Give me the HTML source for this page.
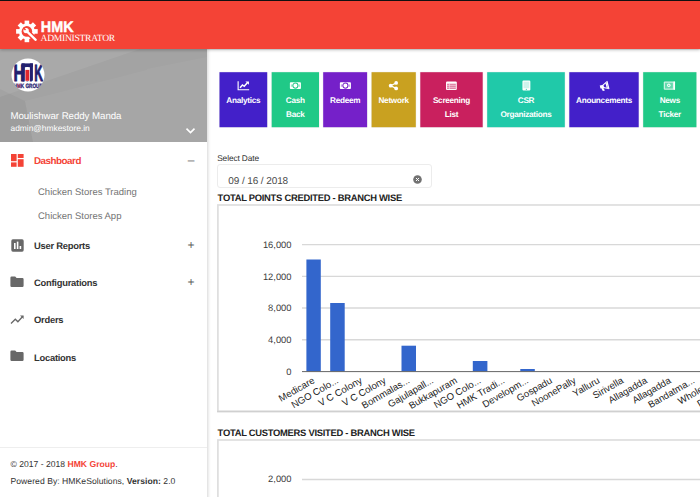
<!DOCTYPE html>
<html lang="en">
<head>
<meta charset="utf-8">
<title>HMK Administrator</title>
<style>
*{box-sizing:border-box;margin:0;padding:0}
html,body{text-rendering:geometricPrecision;width:700px;height:500px;overflow:hidden;background:#fff;font-family:"Liberation Sans",Arial,sans-serif;color:#333}
#app{position:relative;width:700px;height:500px;overflow:hidden;background:#fff}
.abs{position:absolute}
#topline{left:0;top:0;width:700px;height:1px;background:#111}
#header{left:0;top:1px;width:700px;height:48px;background:#f44336;box-shadow:0 1px 3px rgba(0,0,0,.25);z-index:5}
#brand2{left:40.6px;top:32.200px;font-family:"Liberation Serif",serif;font-size:9.6px;color:#fff;letter-spacing:-.3px;line-height:12px;white-space:nowrap}
#sidebar{left:0;top:49px;width:207px;height:451px;background:#fff;box-shadow:1px 0 3px rgba(0,0,0,.17);z-index:4}
#userinfo{left:0;top:0;width:207px;height:92.500px;background:#a3a3a3;overflow:hidden}
#uname{left:10.5px;top:62.2px;font-size:9.7px;letter-spacing:-.05px;color:#fff;line-height:12px;white-space:nowrap}
#umail{left:10.5px;top:74px;font-size:8.4px;color:#fff;line-height:11px;white-space:nowrap}
.mi{left:34px;font-size:9.4px;letter-spacing:-.25px;font-weight:bold;color:#333;line-height:12px;white-space:nowrap}
.mi.act{color:#f44336}
.smi{left:38px;font-size:9.5px;color:#747474;line-height:12px;white-space:nowrap}
.pm{left:185px;width:12px;text-align:center;font-size:12px;color:#606060;line-height:12px}
#foot{left:0;top:398px;width:207px;height:53px;border-top:1px solid #eee;background:#fff}
#foot div{position:absolute;left:10.5px;font-size:8.6px;color:#333;white-space:nowrap;line-height:11px}
#foot b.r{color:#f44336}
.tile{top:72px;height:55px;color:#fff;text-align:center;font-weight:bold;font-size:8.2px;letter-spacing:-.27px;line-height:14px}
.tile svg{position:absolute;left:50%;top:7px;margin-left:-8.4px;width:16.8px;height:13.2px}
.tile span{position:absolute;left:0;right:0;top:22.300px;display:block;white-space:nowrap}
.h{left:217.6px;font-size:9.4px;letter-spacing:-.27px;font-weight:bold;color:#222;line-height:11px;white-space:nowrap}
.chartbox{left:217.1px;width:500px;border:1.4px solid #dcdcdc;border-bottom-color:#cdcdcd;background:#fff}
</style>
</head>
<body>
<div id="app">
  <div id="main" class="abs" style="left:207px;top:49px;width:493px;height:451px;background:#fff;border-top:1.5px solid #e6ecec"></div>

  <!-- tiles -->
  <svg class="abs" style="left:210px;top:66px" width="490" height="68" viewBox="210 66 490 68">
    <rect x="219.0" y="71.700" width="48.7" height="56" fill="#000" opacity=".07" rx=".800"/>
    <rect x="219.5" y="72.200" width="47.7" height="55" fill="#4320c9"/>
    <rect x="271.2" y="71.700" width="48.3" height="56" fill="#000" opacity=".07" rx=".800"/>
    <rect x="271.7" y="72.200" width="47.3" height="55" fill="#20c987"/>
    <rect x="322.7" y="71.700" width="44.9" height="56" fill="#000" opacity=".07" rx=".800"/>
    <rect x="323.2" y="72.200" width="43.9" height="55" fill="#7520c9"/>
    <rect x="371.1" y="71.700" width="45.2" height="56" fill="#000" opacity=".07" rx=".800"/>
    <rect x="371.6" y="72.200" width="44.2" height="55" fill="#c9a120"/>
    <rect x="419.8" y="71.700" width="63.4" height="56" fill="#000" opacity=".07" rx=".800"/>
    <rect x="420.3" y="72.200" width="62.4" height="55" fill="#c9205e"/>
    <rect x="486.7" y="71.700" width="78.6" height="56" fill="#000" opacity=".07" rx=".800"/>
    <rect x="487.2" y="72.200" width="77.6" height="55" fill="#20c9a9"/>
    <rect x="568.8" y="71.700" width="70.4" height="56" fill="#000" opacity=".07" rx=".800"/>
    <rect x="569.3" y="72.200" width="69.4" height="55" fill="#4320c9"/>
    <rect x="642.7" y="71.700" width="54.2" height="56" fill="#000" opacity=".07" rx=".800"/>
    <rect x="643.2" y="72.200" width="53.2" height="55" fill="#20c987"/>
  </svg>
  <div class="abs tile" style="left:219.5px;width:47.7px"><svg viewBox="0 0 14 11"><path d="M2.600 1.900v7.100h9.200" fill="none" stroke="#fff" stroke-width=".950"/><path d="M4.200 7.300l2-2.300 1.500 1.100 2.600-2.900" fill="none" stroke="#fff" stroke-width="1.250"/><path d="M8.700 2h2.900v2.900z" fill="#fff"/></svg><span>Analytics</span></div>
  <div class="abs tile" style="left:271.7px;width:47.3px"><svg viewBox="0 0 14 11"><rect x="2.400" y="2.700" width="9.200" height="5.600" rx=".700" fill="#fff"/><ellipse cx="7" cy="5.500" rx="2.150" ry="2.150" fill="none" stroke="#20c987" stroke-width=".900"/><rect x="3.200" y="4.500" width=".900" height="2" fill="#20c987" opacity=".450"/><rect x="9.900" y="4.500" width=".900" height="2" fill="#20c987" opacity=".450"/></svg><span>Cash<br>Back</span></div>
  <div class="abs tile" style="left:323.2px;width:43.9px"><svg viewBox="0 0 14 11"><rect x="2.400" y="2.700" width="9.200" height="5.600" rx=".700" fill="#fff"/><ellipse cx="7" cy="5.500" rx="2.150" ry="2.150" fill="none" stroke="#7520c9" stroke-width=".900"/><rect x="3.200" y="4.500" width=".900" height="2" fill="#7520c9" opacity=".450"/><rect x="9.900" y="4.500" width=".900" height="2" fill="#7520c9" opacity=".450"/></svg><span>Redeem</span></div>
  <div class="abs tile" style="left:371.6px;width:44.2px"><svg viewBox="0 0 14 11"><path d="M9.300 3.300L4.700 5.600l4.600 2.200" fill="none" stroke="#fff" stroke-width="1.050"/><circle cx="9.300" cy="3.300" r="1.550" fill="#fff"/><circle cx="4.700" cy="5.600" r="1.550" fill="#fff"/><circle cx="9.300" cy="7.900" r="1.550" fill="#fff"/></svg><span>Network</span></div>
  <div class="abs tile" style="left:420.3px;width:62.4px"><svg viewBox="0 0 14 11"><rect x="2.500" y="2" width="9" height="7.200" rx=".900" fill="#fff"/><rect x="3.300" y="3.900" width="7.400" height="4.500" fill="#c9205e" opacity=".550"/><g fill="#fff" opacity=".700"><rect x="5" y="3.900" width=".500" height="4.500"/><rect x="3.300" y="5.200" width="7.400" height=".450"/><rect x="3.300" y="6.700" width="7.400" height=".450"/></g></svg><span>Screening<br>List</span></div>
  <div class="abs tile" style="left:487.2px;width:77.6px"><svg viewBox="0 0 14 11"><rect x="3.700" y="1.300" width="6.600" height="8.300" rx=".900" fill="#fff"/><rect x="4.600" y="2.200" width="4.800" height="5.500" fill="#20c9a9" opacity=".220"/><circle cx="7" cy="8.600" r=".550" fill="#20c9a9" opacity=".800"/></svg><span>CSR<br>Organizations</span></div>
  <div class="abs tile" style="left:569.3px;width:69.4px"><svg viewBox="0 0 14 11"><g transform="rotate(-14 7 5.500) translate(7 5.700) scale(.860) translate(-7 -5.500)"><path d="M2.600 4.200h2.600l4.600-2.400v7.600L5.200 7.100H2.600z" fill="#fff"/><path d="M3.400 7.100h2l.9 2.900H4.300z" fill="#fff"/><path d="M6.300 4.700l2.300-1.200v4.200L6.300 6.600z" fill="#4320c9"/><rect x="9.800" y="1.400" width="1.200" height="8.400" rx=".600" fill="#fff"/></g></svg><span>Anouncements</span></div>
  <div class="abs tile" style="left:643.2px;width:53.2px"><svg viewBox="0 0 14 11"><rect x="2.300" y="2.100" width="9.400" height="6.900" rx=".800" fill="#fff" opacity=".780"/><rect x="3.300" y="3.100" width="6.600" height="4.900" fill="#20c987" opacity=".600"/><circle cx="6.500" cy="5.300" r="1.500" fill="#fff" opacity=".900"/><circle cx="6.500" cy="5.300" r=".600" fill="#20c987" opacity=".800"/><rect x="10.500" y="2.100" width="1.200" height="6.900" fill="#fff"/></svg><span>News<br>Ticker</span></div>

  <!-- date -->
  <div class="abs" style="left:217.2px;top:153.2px;font-size:8.3px;letter-spacing:-.1px;color:#333;line-height:11px">Select Date</div>
  <div class="abs" style="left:217.3px;top:163.8px;width:215px;height:24px;border:1px solid #ececec;border-radius:3px;background:#fff"></div>
  <div class="abs" style="left:228.3px;top:176px;font-size:10px;color:#4a4a4a;line-height:12px;white-space:nowrap;letter-spacing:-.1px">09 / 16 / 2018</div>
  <svg class="abs" style="left:413px;top:174.900px" width="9" height="9" viewBox="0 0 9 9"><circle cx="4.500" cy="4.500" r="4.300" fill="#727272"/><path d="M3 3l3 3M6 3l-3 3" stroke="#fff" stroke-width="1"/></svg>

  <div class="abs h" style="top:191.6px">TOTAL POINTS CREDITED - BRANCH WISE</div>
  
  <div class="abs h" style="top:426.800px">TOTAL CUSTOMERS VISITED - BRANCH WISE</div>
  

  <svg class="abs" style="left:210px;top:200px" width="490" height="300" viewBox="210 200 490 300">
    <rect x="217.900" y="205" width="500" height="206.400" fill="#fff" stroke="#dedede" stroke-width="1.700"/>
    <line x1="217.100" x2="700" y1="411.500" y2="411.500" stroke="#d0d0d0" stroke-width="1.600"/>
    <rect x="217.900" y="440" width="500" height="100" fill="#fff" stroke="#dedede" stroke-width="1.700"/>
  </svg>
  <!-- charts -->
  <svg class="abs" style="left:218px;top:205px" width="482" height="295" viewBox="218 205 482 295" font-family="Liberation Sans, Arial, sans-serif">
    <g stroke="#d8d8d8" stroke-width="1.400">
      <line x1="302" x2="700" y1="244.6" y2="244.6"/>
      <line x1="302" x2="700" y1="276.4" y2="276.4"/>
      <line x1="302" x2="700" y1="308" y2="308"/>
      <line x1="302" x2="700" y1="339.7" y2="339.7"/>
      <line x1="302" x2="700" y1="479.5" y2="479.5"/>
    </g>
    <g fill="#3366cc">
      <rect x="306.4" y="259.5" width="14.4" height="112"/>
      <rect x="330.2" y="303" width="14.5" height="68.5"/>
      <rect x="401.5" y="345.7" width="14.5" height="25.8"/>
      <rect x="472.8" y="361" width="14.6" height="10.5"/>
      <rect x="520.3" y="369" width="14.5" height="2.5"/>
    </g>
    <line x1="302" x2="700" y1="371.6" y2="371.6" stroke="#666" stroke-width="1"/>
    <g font-size="9.350" fill="#3b3b3b" text-anchor="end">
      <text x="291.500" y="247.900">16,000</text>
      <text x="291.500" y="279.800">12,000</text>
      <text x="291.500" y="311.400">8,000</text>
      <text x="291.500" y="343.100">4,000</text>
      <text x="291.500" y="374.900">0</text>
      <text x="291.500" y="482.200">2,000</text>
    </g>
    <g font-size="9.6" fill="#222" text-anchor="end" id="xl">
      <text transform="translate(315.3 382.3) rotate(-30)">Medicare</text>
      <text transform="translate(339.1 382.3) rotate(-30)">NGO Colo...</text>
      <text transform="translate(362.8 382.3) rotate(-30)">V C Colony</text>
      <text transform="translate(386.6 382.3) rotate(-30)">V C Colony</text>
      <text transform="translate(410.3 382.3) rotate(-30)">Bommalas...</text>
      <text transform="translate(434.1 382.3) rotate(-30)">Gajulapall...</text>
      <text transform="translate(457.8 382.3) rotate(-30)">Bukkapuram</text>
      <text transform="translate(481.6 382.3) rotate(-30)">NGO Colo...</text>
      <text transform="translate(505.3 382.3) rotate(-30)">HMK Tradi...</text>
      <text transform="translate(529.1 382.3) rotate(-30)">Developm...</text>
      <text transform="translate(552.8 382.3) rotate(-30)">Gospadu</text>
      <text transform="translate(576.6 382.3) rotate(-30)">NoonePally</text>
      <text transform="translate(600.3 382.3) rotate(-30)">Yalluru</text>
      <text transform="translate(624.1 382.3) rotate(-30)">Sirivella</text>
      <text transform="translate(647.8 382.3) rotate(-30)">Allagadda</text>
      <text transform="translate(671.6 382.3) rotate(-30)">Allagadda</text>
      <text transform="translate(695.3 382.3) rotate(-30)">Bandatma...</text>
      <text transform="translate(719.1 382.3) rotate(-30)">Wholesale</text>
      <text transform="translate(742.8 382.3) rotate(-30)">Departme...</text>
    </g>
  </svg>

  <!-- sidebar -->
  <div id="sidebar" class="abs">
    <div id="userinfo" class="abs">
      <svg class="abs" style="left:0;top:0" width="207" height="93" viewBox="0 0 207 93">
        <polygon points="0,0 140,0 0,48" fill="#fff" opacity=".07"/>
        <polygon points="0,40 25,52 33,93 0,93" fill="#000" opacity=".035"/>
        <polygon points="25,52 147,21 147,93 33,93" fill="#fff" opacity=".045"/>
        <polygon points="147,20 207,8 207,93 147,93" fill="#fff" opacity=".045"/>
      </svg>
      <svg class="abs" style="left:9.600px;top:7.700px" width="36" height="36" viewBox="0 0 36 36" font-family="Liberation Sans, Arial, sans-serif">
        <defs><clipPath id="lc"><circle cx="18" cy="18" r="16.500"/></clipPath></defs>
        <circle cx="18" cy="18" r="16.500" fill="#fff"/>
        <g clip-path="url(#lc)" font-weight="bold" fill="#23206e">
          <g font-size="23.500" stroke="#23206e" stroke-width=".900">
            <text x="3.400" y="23.700" textLength="11" lengthAdjust="spacingAndGlyphs">H</text>
            <text x="12" y="23.700" textLength="10.500" lengthAdjust="spacingAndGlyphs">M</text>
            <text x="24.300" y="23.700" textLength="8.800" lengthAdjust="spacingAndGlyphs">K</text>
          </g>
          <rect x="14.700" y="10.200" width="5.300" height="14" fill="#fff"/>
          <rect x="11.600" y="6.400" width="11.300" height="3.600"/><rect x="11.600" y="6.400" width="3.100" height="17.300"/><rect x="19.900" y="6.400" width="3" height="17.300"/>
          <rect x="15.400" y="12.900" width="3.900" height="10.900" fill="#e0262d"/>
          <text x="3.500" y="31.200" font-size="6.300" textLength="29" lengthAdjust="spacingAndGlyphs" stroke="#23206e" stroke-width=".300">H<tspan fill="#e0262d">M</tspan>K GROUP</text>
        </g>
      </svg>
      <div id="uname" class="abs">Moulishwar Reddy Manda</div>
      <div id="umail" class="abs">admin@hmkestore.in</div>
      <svg class="abs" style="left:184.800px;top:77.800px" width="11" height="8" viewBox="0 0 11 8"><path d="M1.500 1.600l4 4 4-4" fill="none" stroke="#fff" stroke-width="1.600"/></svg>
    </div>

    <!-- menu -->
    <svg class="abs" style="left:11px;top:105px" width="13" height="13" viewBox="0 0 13 13"><g fill="#f44336"><rect x="0" y="0" width="5.6" height="7.2"/><rect x="6.8" y="0" width="5.8" height="4"/><rect x="0" y="8.4" width="5.6" height="4.4"/><rect x="6.8" y="5.2" width="5.8" height="7.6"/></g></svg>
    <div class="abs mi act" style="top:107.200px;font-size:9.800px;letter-spacing:-.47px">Dashboard</div>
    <div class="abs pm" style="top:104.5px">&#8211;</div>
    <div class="abs smi" style="top:138px">Chicken Stores Trading</div>
    <div class="abs smi" style="top:161.500px">Chicken Stores App</div>

    <svg class="abs" style="left:11px;top:190px" width="13" height="13" viewBox="0 0 13 13"><rect x=".3" y=".3" width="12.4" height="12.4" rx="1.6" fill="#686868"/><g fill="#fff"><rect x="3" y="4" width="1.6" height="6"/><rect x="5.8" y="2.6" width="1.6" height="7.4"/><rect x="8.6" y="7" width="1.6" height="3"/></g></svg>
    <div class="abs mi" style="top:190.5px">User Reports</div>
    <div class="abs pm" style="top:189.5px">+</div>

    <svg class="abs" style="left:9.700px;top:226.700px" width="14" height="12" viewBox="0 0 14 12"><path d="M.4 1.8q0-1.2 1.2-1.2h3.6l1.4 1.4h5.8q1.2 0 1.2 1.2v6.6q0 1.2-1.2 1.2H1.600q-1.2 0-1.2-1.200z" fill="#686868"/></svg>
    <div class="abs mi" style="top:228px">Configurations</div>
    <div class="abs pm" style="top:227px">+</div>

    <svg class="abs" style="left:10px;top:264.600px" width="15" height="11" viewBox="0 0 15 11"><path d="M1 9.500l4.300-4.300 2.600 2.600 5-5.600" fill="none" stroke="#686868" stroke-width="1.300"/><path d="M10 1.500h3.600v3.600z" fill="#686868"/></svg>
    <div class="abs mi" style="top:265px">Orders</div>

    <svg class="abs" style="left:9.700px;top:301.200px" width="14" height="12" viewBox="0 0 14 12"><path d="M.4 1.8q0-1.200 1.200-1.200h3.600l1.400 1.400h5.800q1.200 0 1.200 1.200v6.600q0 1.200-1.200 1.200H1.600q-1.200 0-1.200-1.200z" fill="#686868"/></svg>
    <div class="abs mi" style="top:302.500px">Locations</div>

    <div id="foot" class="abs">
      <div style="top:11px">&copy; 2017 - 2018 <b class="r">HMK Group</b>.</div>
      <div style="top:27.500px;letter-spacing:.04px">Powered By: HMKeSolutions, <b>Version:</b> 2.0</div>
    </div>
  </div>

  <!-- header -->
  <div id="header" class="abs">
    <svg class="abs" style="left:0;top:0" width="130" height="48" viewBox="0 0 130 48" font-family="Liberation Sans, Arial, sans-serif">
      <g transform="translate(26.900 30.400)" fill="#fff">
        <g>
          <rect x="-2.3" y="-10.8" width="4.6" height="5"/>
          <rect x="-2.3" y="5.8" width="4.6" height="5"/>
          <rect x="-10.8" y="-2.3" width="5" height="4.6"/>
          <rect x="5.800" y="-2.3" width="5" height="4.6"/>
          <g transform="rotate(45)">
            <rect x="-2.3" y="-10.8" width="4.6" height="5"/>
            <rect x="-2.3" y="5.8" width="4.6" height="5"/>
            <rect x="-10.8" y="-2.3" width="5" height="4.600"/>
          </g>
        </g>
        <circle r="8"/>
        <circle r="5.300" fill="#f44336"/>
        <path d="M1 1l9.500 9" stroke="#f44336" stroke-width="5.200" fill="none"/>
        <circle cx="-.8" cy="-.8" r="2.700"/>
        <path d="M-3.600 -3.600l2.200 2.200" stroke="#f44336" stroke-width="1.500" fill="none"/>
        <path d="M0 0l8.800 8.400" stroke="#fff" stroke-width="2.300" fill="none" stroke-linecap="round"/>
      </g>
      <text x="40.800" y="31" font-size="15.300" font-weight="bold" fill="#fff" stroke="#fff" stroke-width=".450" textLength="32.800" lengthAdjust="spacingAndGlyphs">HMK</text>
    </svg>
    <div id="brand2" class="abs">ADMINISTRATOR</div>
  </div>
  <div id="topline" class="abs"></div>
  <div class="abs" style="left:0;top:496.700px;width:700px;height:3.300px;background:#fff;z-index:9"></div>
</div>
</body>
</html>
